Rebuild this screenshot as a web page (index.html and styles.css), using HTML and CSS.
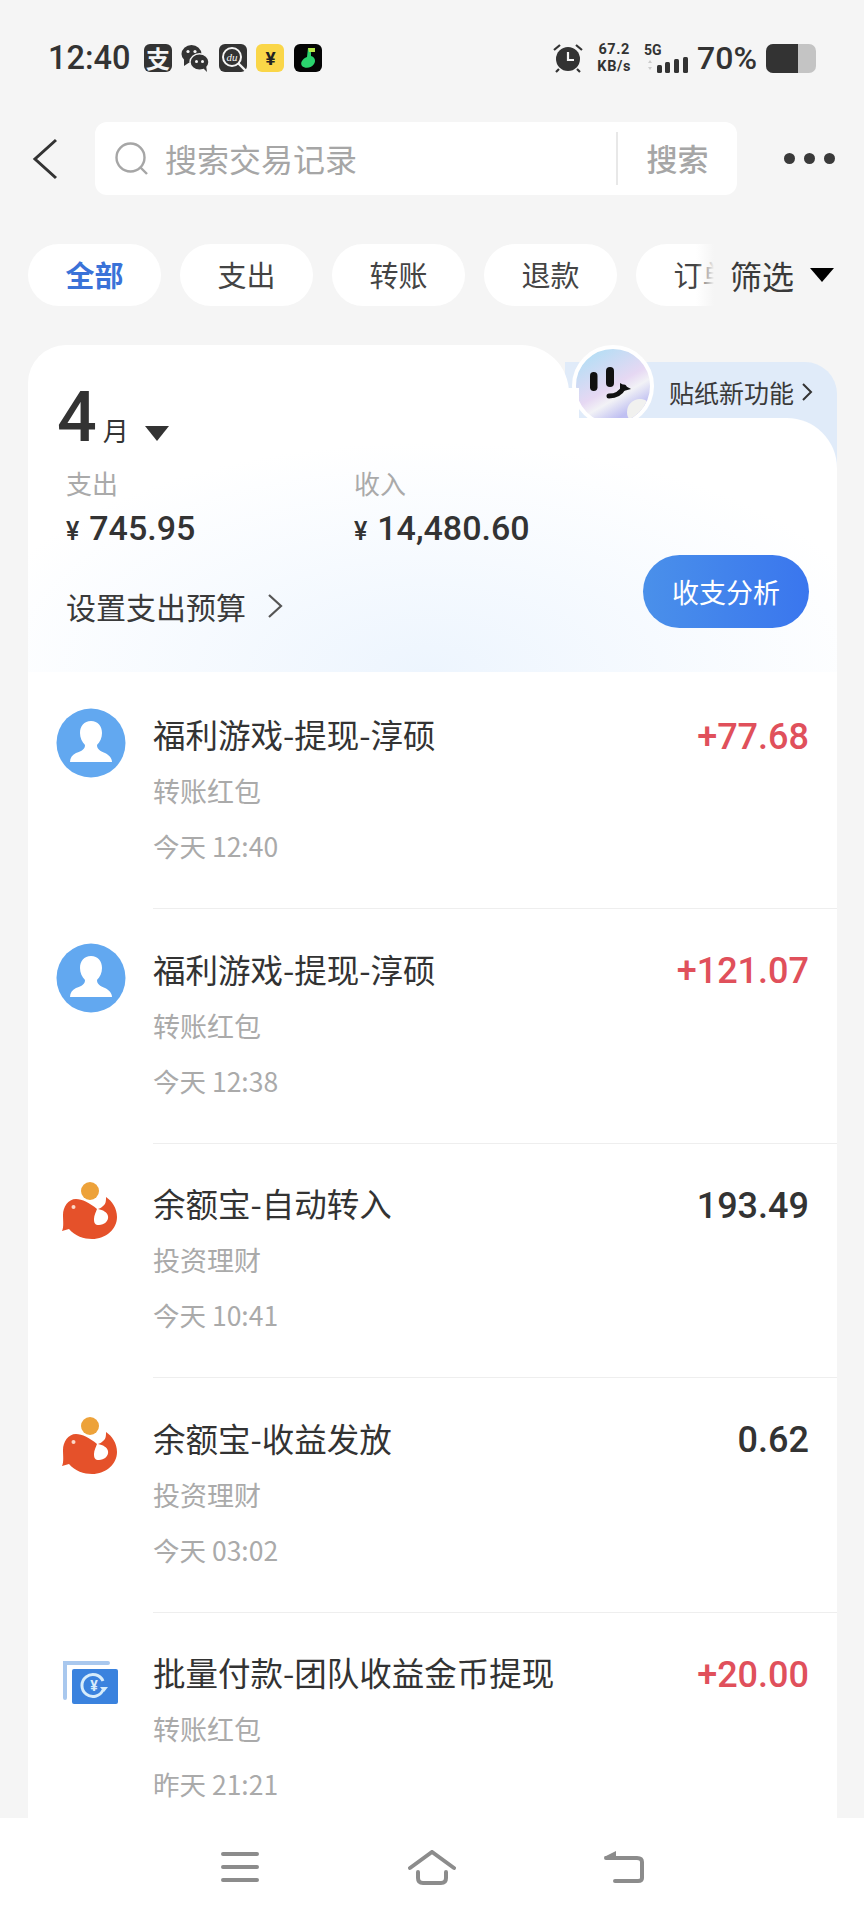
FILE: index.html
```html
<!DOCTYPE html>
<html lang="zh-CN">
<head>
  <meta charset="UTF-8" />
  <title>账单</title>
  <link rel="stylesheet" href="styles.css">
</head>
<body>
<div class="page">

  <!-- status bar -->
  <div class="status">
    <div class="status-left">
      <span class="time">12:40</span>
      <span class="app-icon app-dark"><span class="zhi">支</span></span>
      <svg class="app-svg" viewBox="0 0 28 28">
        <ellipse cx="10.5" cy="10" rx="10" ry="9" fill="#333"/>
        <path d="M3 15 L3 22 L9 18 Z" fill="#333"/>
        <circle cx="7" cy="7.5" r="1.6" fill="#f5f5f5"/>
        <circle cx="14" cy="7.5" r="1.6" fill="#f5f5f5"/>
        <ellipse cx="18.5" cy="18" rx="9.5" ry="8.2" fill="#333" stroke="#f5f5f5" stroke-width="1.4"/>
        <path d="M22 24 L26 28 L25 21 Z" fill="#333"/>
        <circle cx="15.5" cy="17.5" r="1.5" fill="#f5f5f5"/>
        <circle cx="21.5" cy="17.5" r="1.5" fill="#f5f5f5"/>
      </svg>
      <svg class="app-svg" viewBox="0 0 28 28">
        <rect width="28" height="28" rx="6" fill="#333"/>
        <circle cx="13" cy="13" r="9" fill="none" stroke="#f5f5f5" stroke-width="2"/>
        <path d="M19 19 L27 27" stroke="#f5f5f5" stroke-width="2.4"/>
        <text x="13" y="16.5" class="du-text">du</text>
      </svg>
      <span class="app-icon app-yellow">¥</span>
      <svg class="app-svg" viewBox="0 0 28 28">
        <rect width="28" height="28" rx="6" fill="#050505"/>
        <path d="M14 4 L21 4 L21 8 L17 8 L17 12 C21 13 22 17 20 20 C18 24 11 25 8 22 C6 19 8 15 13 13 Z" fill="#2bd46e"/>
        <path d="M14 4 L21 4 L21 8 L15 8 Z" fill="#b6e84a"/>
      </svg>
    </div>
    <div class="status-right">
      <svg class="alarm" viewBox="0 0 30 30">
        <circle cx="15" cy="16" r="12" fill="#333"/>
        <path d="M15 9 V17 H21" fill="none" stroke="#f5f5f5" stroke-width="2.2"/>
        <path d="M1 7 L7 2 M29 7 L23 2 M6 26 L3 29 M24 26 L27 29" stroke="#333" stroke-width="2.2"/>
      </svg>
      <div class="speed"><span>67.2</span><span>KB/s</span></div>
      <div class="net">
        <span class="net-label">5G</span>
        <svg class="bars" viewBox="0 0 44 16">
          <path d="M3 6 L5 3 L7 6 Z M3 10 L5 13 L7 10 Z" fill="#ccc"/>
          <rect x="12" y="8" width="5" height="8" rx="1.5" fill="#333"/>
          <rect x="20" y="5" width="5" height="11" rx="1.5" fill="#333"/>
          <rect x="29" y="2" width="5" height="14" rx="1.5" fill="#333"/>
          <rect x="38" y="0" width="5" height="16" rx="1.5" fill="#333"/>
        </svg>
      </div>
      <span class="percent">70%</span>
      <div class="battery"><div class="battery-fill"></div></div>
    </div>
  </div>

  <!-- search -->
  <div class="search-row">
    <svg class="back" viewBox="0 0 26 42">
      <path d="M24 2 L3 21 L24 40" fill="none" stroke="#333" stroke-width="3"/>
    </svg>
    <div class="search-box">
      <svg class="search-icon" viewBox="0 0 34 34">
        <circle cx="15.5" cy="15.5" r="14" fill="none" stroke="#a6a6a6" stroke-width="2.4"/>
        <path d="M25.5 25.5 L32 32" stroke="#a6a6a6" stroke-width="2.4"/>
      </svg>
      <span class="search-hint">搜索交易记录</span>
      <span class="search-btn">搜索</span>
    </div>
    <div class="more"><i></i><i></i><i></i></div>
  </div>

  <!-- filter chips -->
  <div class="chips">
    <span class="chip chip-on">全部</span>
    <span class="chip">支出</span>
    <span class="chip">转账</span>
    <span class="chip">退款</span>
    <span class="chip">订单</span>
    <div class="filter">筛选<i class="tri-black"></i></div>
  </div>

  <div class="main">
    <div class="card">
      <div class="sticker-tab">
        <div class="sticker">
          <svg class="sticker-face" viewBox="0 0 42 32">
            <rect x="0" y="5" width="7.5" height="19" rx="3.7" fill="#111"/>
            <rect x="16" y="0" width="8" height="20" rx="4" fill="#111"/>
            <path d="M19 29 C26 29 31 26 34 20" fill="none" stroke="#111" stroke-width="5" stroke-linecap="round"/>
            <path d="M30 16 L41 22 L30 25 Z" fill="#111"/>
          </svg>
          <div class="sticker-curl"></div>
        </div>
        <span class="sticker-text">贴纸新功能</span>
        <svg class="sticker-arrow" viewBox="0 0 12 20">
          <path d="M2 2 L10 10 L2 18" fill="none" stroke="#333" stroke-width="2"/>
        </svg>
      </div>
      <div class="tab-top"></div>

      <div class="summary">
        <div class="month">
          <span class="month-num">4</span>
          <span class="month-unit">月</span>
          <i class="tri-dark"></i>
        </div>
        <div class="totals">
          <div class="total">
            <div class="total-label">支出</div>
            <div class="total-value"><span class="yen">¥</span>745.95</div>
          </div>
          <div class="total">
            <div class="total-label">收入</div>
            <div class="total-value"><span class="yen">¥</span>14,480.60</div>
          </div>
        </div>
        <div class="budget-row">
          <div class="budget">设置支出预算
            <svg class="budget-arrow" viewBox="0 0 16 26">
              <path d="M2 2 L14 13 L2 24" fill="none" stroke="#555" stroke-width="2.2"/>
            </svg>
          </div>
          <div class="analyse">收支分析</div>
        </div>
      </div>

      <div class="list">
        <div class="row">
          <svg class="row-icon" viewBox="0 0 70 70">
            <circle cx="35" cy="35" r="34.5" fill="#62a8f0"/>
            <path d="M35 13 C28 13 24 18 24 25 C24 30 26 34 29 37 C29 41 26 43 20 45 C16 47 14 50 14 54 L56 54 C56 50 53 47 49 45 C44 43 41 41 41 37 C44 34 46 30 46 25 C46 18 42 13 35 13 Z" fill="#fff"/>
          </svg>
          <div class="row-body">
            <div>
              <div class="row-title">福利游戏-提现-淳硕</div>
              <div class="row-sub">转账红包</div>
              <div class="row-date">今天 12:40</div>
            </div>
            <div class="amount amount-in">+77.68</div>
          </div>
        </div>

        <div class="row">
          <svg class="row-icon" viewBox="0 0 70 70">
            <circle cx="35" cy="35" r="34.5" fill="#62a8f0"/>
            <path d="M35 13 C28 13 24 18 24 25 C24 30 26 34 29 37 C29 41 26 43 20 45 C16 47 14 50 14 54 L56 54 C56 50 53 47 49 45 C44 43 41 41 41 37 C44 34 46 30 46 25 C46 18 42 13 35 13 Z" fill="#fff"/>
          </svg>
          <div class="row-body">
            <div>
              <div class="row-title">福利游戏-提现-淳硕</div>
              <div class="row-sub">转账红包</div>
              <div class="row-date">今天 12:38</div>
            </div>
            <div class="amount amount-in">+121.07</div>
          </div>
        </div>

        <div class="row">
          <svg class="row-icon" viewBox="0 0 70 70">
            <circle cx="34" cy="14" r="9" fill="#eda23a"/>
            <path d="M20 22 C12 22 7 30 7 38 C7 44 8 50 6 54 L13 52 C19 59 28 62 36 62 C50 62 61 52 61 40 C61 31 56 24 50 20 C50 24 50 27 47 29 C45 31 44 31 42 32 C47 33 51 35 52 39 C53 44 48 48 43 48 C39 48 38 46 38 42 C38 38 40 35 41 32 C34 26 26 22 20 22 Z" fill="#e5512a"/>
            <circle cx="17.5" cy="30" r="2" fill="#fbd8c8"/>
          </svg>
          <div class="row-body">
            <div>
              <div class="row-title">余额宝-自动转入</div>
              <div class="row-sub">投资理财</div>
              <div class="row-date">今天 10:41</div>
            </div>
            <div class="amount">193.49</div>
          </div>
        </div>

        <div class="row">
          <svg class="row-icon" viewBox="0 0 70 70">
            <circle cx="34" cy="14" r="9" fill="#eda23a"/>
            <path d="M20 22 C12 22 7 30 7 38 C7 44 8 50 6 54 L13 52 C19 59 28 62 36 62 C50 62 61 52 61 40 C61 31 56 24 50 20 C50 24 50 27 47 29 C45 31 44 31 42 32 C47 33 51 35 52 39 C53 44 48 48 43 48 C39 48 38 46 38 42 C38 38 40 35 41 32 C34 26 26 22 20 22 Z" fill="#e5512a"/>
            <circle cx="17.5" cy="30" r="2" fill="#fbd8c8"/>
          </svg>
          <div class="row-body">
            <div>
              <div class="row-title">余额宝-收益发放</div>
              <div class="row-sub">投资理财</div>
              <div class="row-date">今天 03:02</div>
            </div>
            <div class="amount">0.62</div>
          </div>
        </div>

        <div class="row">
          <svg class="row-icon" viewBox="0 0 70 70">
            <path d="M9 52 L9 17 L52 17" fill="none" stroke="#a9c8ee" stroke-width="4" stroke-linecap="round"/>
            <rect x="16" y="23" width="46" height="35" rx="2" fill="#3a82de"/>
            <path d="M47 44 A11 11 0 1 1 47 35" fill="none" stroke="#d6ecfb" stroke-width="3"/>
            <path d="M44 41 L52 41 L48 46 Z" fill="#d6ecfb"/>
            <text x="38" y="45" class="transfer-yen">¥</text>
          </svg>
          <div class="row-body">
            <div>
              <div class="row-title">批量付款-团队收益金币提现</div>
              <div class="row-sub">转账红包</div>
              <div class="row-date">昨天 21:21</div>
            </div>
            <div class="amount amount-in">+20.00</div>
          </div>
        </div>
      </div>
    </div>
  </div>

  <!-- system nav -->
  <div class="nav">
    <svg class="nav-icon" viewBox="0 0 48 36">
      <path d="M7 4 H41 M7 17 H41 M7 30 H41" stroke="#8c8c8c" stroke-width="4" stroke-linecap="round"/>
    </svg>
    <svg class="nav-icon" viewBox="0 0 48 36">
      <path d="M2 18 L24 2 L46 18" fill="none" stroke="#8c8c8c" stroke-width="4" stroke-linecap="round"/>
      <path d="M10 22 V28 Q10 33 15 33 H33 Q38 33 38 28 V22" fill="none" stroke="#8c8c8c" stroke-width="4" stroke-linecap="round"/>
    </svg>
    <svg class="nav-icon" viewBox="0 0 48 36">
      <path d="M6 8 H37 Q42 8 42 12 V28 Q42 31 38 31 H15" fill="none" stroke="#8c8c8c" stroke-width="4" stroke-linecap="round"/>
      <path d="M4 7 L16 1 L16 9 Z" fill="#8c8c8c"/>
    </svg>
  </div>

</div>
</body>
</html>
```

FILE: styles.css
```css
* {
  box-sizing: border-box;
}

body {
  margin: 0;
  background: #f5f5f5;
  color: #333;
  font-family: "Noto Sans CJK SC", "Noto Sans", sans-serif;
}

.page {
  width: 864px;
  height: 1920px;
  display: flex;
  flex-direction: column;
  overflow: hidden;
}

/* status bar */
.status {
  height: 116px;
  flex: none;
  display: flex;
  align-items: center;
  justify-content: space-between;
  padding: 0 48px;
}

.status-left {
  display: flex;
  align-items: center;
  gap: 9.5px;
}

.time {
  font-family: Roboto, sans-serif;
  font-size: 32.5px;
  font-weight: 500;
  margin-right: 4px;
}

.app-icon {
  width: 28px;
  height: 28px;
  border-radius: 6px;
  display: flex;
  align-items: center;
  justify-content: center;
}

.app-dark {
  background: #333;
}

.zhi {
  color: #f5f5f5;
  font-size: 24px;
  font-weight: 700;
  line-height: 28px;
}

.app-yellow {
  background: #fad648;
  font-family: Roboto, sans-serif;
  font-size: 19px;
  font-weight: 700;
  color: #222;
}

.app-svg {
  width: 28px;
  height: 28px;
}

.du-text {
  font-family: "Liberation Serif", serif;
  font-size: 11px;
  font-style: italic;
  fill: #f5f5f5;
  text-anchor: middle;
}

.status-right {
  display: flex;
  align-items: center;
}

.alarm {
  width: 30px;
  height: 30px;
  margin-right: 14px;
}

.speed {
  display: flex;
  flex-direction: column;
  align-items: center;
  font-family: Roboto, sans-serif;
  font-size: 14.5px;
  font-weight: 700;
  line-height: 17px;
  letter-spacing: 0.6px;
  margin-right: 13px;
}

.net {
  width: 45px;
  height: 30px;
  position: relative;
  margin-right: 8px;
}

.net-label {
  display: block;
  font-family: Roboto, sans-serif;
  font-size: 14px;
  font-weight: 700;
  line-height: 14px;
}

.bars {
  position: absolute;
  right: 0;
  bottom: 0;
  width: 44px;
  height: 16px;
}

.percent {
  font-family: Roboto, sans-serif;
  font-size: 32px;
  font-weight: 500;
  margin-right: 9px;
}

.battery {
  width: 50px;
  height: 29px;
  border-radius: 7px;
  background: #c4c4c4;
  overflow: hidden;
}

.battery-fill {
  width: 32px;
  height: 100%;
  background: #333;
}

/* search */
.search-row {
  height: 73px;
  flex: none;
  margin-top: 6px;
  display: flex;
  align-items: center;
}

.back {
  width: 26px;
  height: 42px;
  margin-left: 32px;
}

.search-box {
  width: 642px;
  height: 73px;
  margin-left: 37px;
  background: #fff;
  border-radius: 12px;
  display: flex;
  align-items: center;
  padding-left: 20px;
}

.search-icon {
  width: 34px;
  height: 34px;
}

.search-hint {
  flex: 1;
  margin-left: 16px;
  font-size: 32px;
  line-height: 44px;
  margin-bottom: 2px;
  color: #a6a6a6;
}

.search-btn {
  width: 121px;
  height: 53px;
  border-left: 2px solid #e8e8e8;
  color: #a6a6a6;
  font-size: 31px;
  font-weight: 500;
  line-height: 52px;
  text-align: center;
}

.more {
  display: flex;
  gap: 9px;
  margin-left: 47px;
}

.more i {
  width: 11px;
  height: 11px;
  border-radius: 50%;
  background: #3a3a3a;
}

/* chips */
.chips {
  height: 62px;
  flex: none;
  margin-top: 49px;
  padding-left: 28px;
  display: flex;
  gap: 19px;
  overflow: hidden;
  position: relative;
}

.chip {
  width: 133px;
  flex: none;
  background: #fff;
  border-radius: 31px;
  font-size: 29px;
  line-height: 60px;
  text-align: center;
  color: #444;
}

.chip-on {
  color: #3a72d8;
  font-weight: 700;
}

.filter {
  position: absolute;
  top: 0;
  right: 0;
  width: 168px;
  height: 62px;
  padding-left: 34px;
  display: flex;
  align-items: center;
  font-size: 32px;
  color: #3a3a3a;
  background: linear-gradient(90deg, rgba(245, 245, 245, 0), #f5f5f5 18px);
}

.tri-black {
  width: 0;
  height: 0;
  margin-left: 16px;
  border-left: 12px solid transparent;
  border-right: 12px solid transparent;
  border-top: 14px solid #000;
}

/* card */
.main {
  flex: 1;
  min-height: 0;
  margin-top: 39px;
  padding: 0 27px 0 28px;
  overflow: hidden;
}

.card {
  position: relative;
  height: 100%;
}

.sticker-tab {
  position: absolute;
  top: 17px;
  right: 0;
  width: 272px;
  height: 130px;
  background: #e0ebf9;
  border-radius: 0 32px 0 0;
  display: flex;
  align-items: flex-start;
}

.sticker {
  position: absolute;
  left: 7px;
  top: -17px;
  width: 82px;
  height: 82px;
  border-radius: 50%;
  border: 4px solid #fff;
  background: linear-gradient(150deg, #b4def5 10%, #e6d8f3 50%, #f2f2f6 62%, #c0c0f2 80%);
  overflow: hidden;
}

.sticker-face {
  position: absolute;
  left: 14px;
  top: 18px;
  width: 42px;
  height: 32px;
}

.sticker-curl {
  position: absolute;
  left: 51px;
  top: 50px;
  width: 26px;
  height: 26px;
  border-radius: 50%;
  background: #f1f1ef;
}

.sticker-text {
  margin: 12px 0 0 104px;
  font-size: 25px;
  line-height: 36px;
  color: #3a3a3a;
}

.sticker-arrow {
  width: 12px;
  height: 20px;
  margin: 20px 0 0 7px;
}

.tab-top {
  position: relative;
  width: 541px;
  height: 73px;
  background: #fff;
  border-radius: 38px 48px 0 0;
}

/* white wedge between the tab and the sticker ring */
.tab-top::after {
  content: "";
  position: absolute;
  right: -10px;
  bottom: 0;
  width: 12px;
  height: 30px;
  background: #fff;
}

.summary {
  position: relative;
  display: flow-root;
  height: 254px;
  padding: 0 28px 0 38px;
  background: radial-gradient(ellipse 470px 230px at 400px 100%, #edf5fe, rgba(255, 255, 255, 0)), #fff;
  border-radius: 0 50px 0 0;
}

.month {
  display: flex;
  align-items: baseline;
  height: 60px;
  margin: -31px 0 0 -9px;
  position: relative;
}

.month-num {
  font-family: Roboto, sans-serif;
  font-size: 70px;
  font-weight: 500;
  line-height: 60px;
}

.month-unit {
  font-size: 26px;
  margin-left: 6px;
}

.tri-dark {
  width: 0;
  height: 0;
  margin-left: 16px;
  border-left: 12px solid transparent;
  border-right: 12px solid transparent;
  border-top: 15px solid #333;
}

.totals {
  display: flex;
  margin-top: 18px;
}

.total {
  width: 290px;
}

.total + .total {
  margin-left: -2px;
}

.total-label {
  font-size: 26px;
  line-height: 36px;
  color: #aaa;
}

.total-value {
  margin-top: 6px;
  font-family: Roboto, sans-serif;
  font-size: 34px;
  font-weight: 500;
  line-height: 42px;
}

.yen {
  font-size: 25px;
  margin-right: 10px;
}

.budget-row {
  display: flex;
  align-items: flex-start;
  justify-content: space-between;
  margin-top: 2px;
}

.budget {
  display: flex;
  align-items: center;
  margin-top: 29px;
  font-size: 30px;
  color: #3a3a3a;
}

.budget-arrow {
  width: 16px;
  height: 26px;
  margin-left: 21px;
}

.analyse {
  width: 166px;
  height: 73px;
  border-radius: 37px;
  background: linear-gradient(90deg, #4a90ea, #3a76ee);
  color: #fff;
  font-size: 27px;
  line-height: 73px;
  text-align: center;
}

/* list */
.list {
  position: relative;
  padding-top: 2.5px;
  background: #fff;
}

.row {
  height: 234.5px;
  display: flex;
}

.row-icon {
  width: 70px;
  height: 70px;
  flex: none;
  margin: 33.5px 0 0 28px;
}

.row-body {
  flex: 1;
  margin-left: 27px;
  padding: 39.5px 28px 0 0;
  display: flex;
  justify-content: space-between;
  border-bottom: 1px solid #eeeeee;
}

.row-title {
  font-size: 32.5px;
  line-height: 40px;
  color: #333;
}

.row-sub,
.row-date {
  margin-top: 19px;
  line-height: 36px;
  color: #aaa;
}

.row-sub {
  font-size: 27px;
}

.row-date {
  font-size: 26.5px;
}

.amount {
  margin-top: 2.5px;
  font-family: Roboto, sans-serif;
  font-size: 36px;
  font-weight: 500;
  line-height: 40px;
  color: #333;
}

.amount-in {
  color: #e0505b;
}

.transfer-yen {
  font-family: Roboto, sans-serif;
  font-size: 14px;
  font-weight: 700;
  fill: #d6ecfb;
  text-anchor: middle;
}

/* bottom nav */
.nav {
  height: 102px;
  flex: none;
  position: relative;
  background: #fff;
  display: grid;
  grid-template-columns: repeat(3, 192px);
  justify-content: center;
  justify-items: center;
  padding-top: 32px;
}

.nav-icon {
  width: 48px;
  height: 36px;
}
```
